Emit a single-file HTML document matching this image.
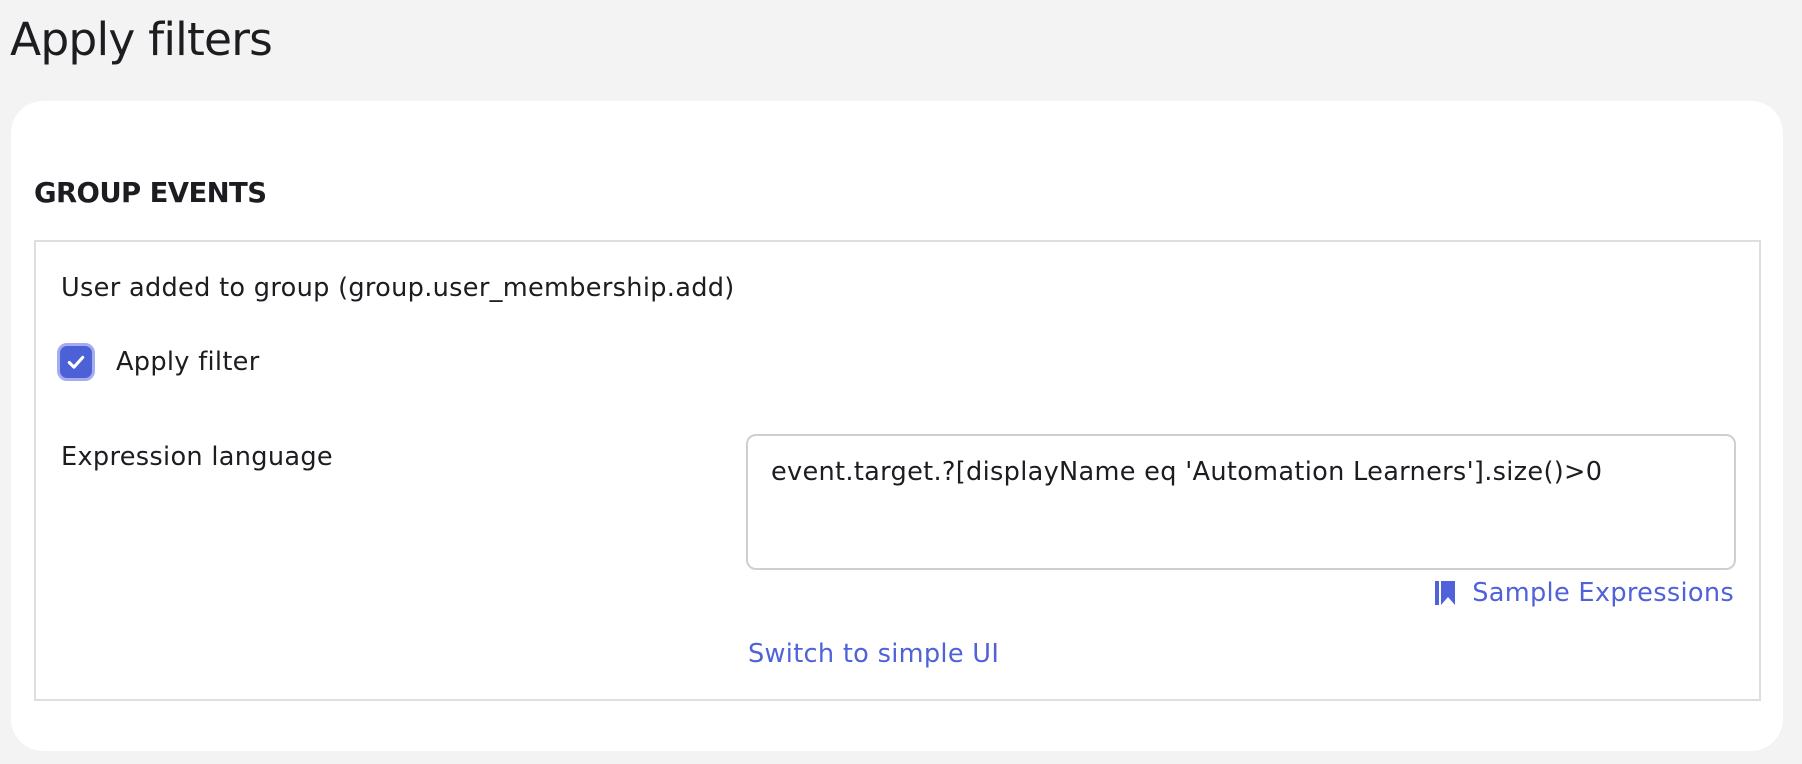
<!DOCTYPE html>
<html><head><style>
body{margin:0;width:1802px;height:764px;background:#f3f3f3;font-family:"DejaVu Sans","Liberation Sans",sans-serif;color:#1d1d21;position:relative;overflow:hidden}
div,span{position:absolute}
.t{white-space:nowrap;font-size:25.6px;line-height:30px;letter-spacing:0.3px}
</style></head><body>
<div class="t" style="left:10px;top:12px;font-size:45.5px;line-height:56px;letter-spacing:-0.8px">Apply filters</div>
<div style="left:11px;top:101px;width:1772px;height:650px;background:#fff;border-radius:32px"></div>
<div class="t" style="left:34px;top:177px;font-size:27.5px;line-height:32px;font-weight:bold;letter-spacing:-0.6px">GROUP EVENTS</div>
<div style="left:34px;top:240px;width:1723px;height:457px;border:2px solid #dedede"></div>
<div class="t" style="left:61px;top:273px">User added to group (group.user_membership.add)</div>
<div style="left:57px;top:343px;width:32px;height:32px;border:3px solid #a4adee;border-radius:10px;background:#4d61d7">
<svg width="32" height="32" viewBox="0 0 31 31" style="position:absolute;left:0;top:0"><path d="M9 16l4.5 4.5L22 11" stroke="#fff" stroke-width="3" fill="none" stroke-linecap="round" stroke-linejoin="round"/></svg></div>
<div class="t" style="left:116px;top:347px">Apply filter</div>
<div class="t" style="left:61px;top:442px">Expression language</div>
<div style="left:746px;top:434px;width:986px;height:132px;border:2px solid #cfcfcf;border-radius:10px;background:#fff"></div>
<div class="t" style="left:771px;top:457px">event.target.?[displayName eq 'Automation Learners'].size()&gt;0</div>
<div style="left:1200px;top:578px;width:534px;display:flex;justify-content:flex-end;align-items:center;color:#4f62d9" class="t">
<svg width="22" height="24" viewBox="0 0 22 24" style="margin-right:15px"><rect x="0" y="0" width="4" height="24" fill="#4f62d9"/><path d="M6 0h14v24l-7-8-7 8z" fill="#4f62d9"/></svg><span style="position:static">Sample Expressions</span></div>
<div class="t" style="left:748px;top:639px;color:#4f62d9">Switch to simple UI</div>
</body></html>
